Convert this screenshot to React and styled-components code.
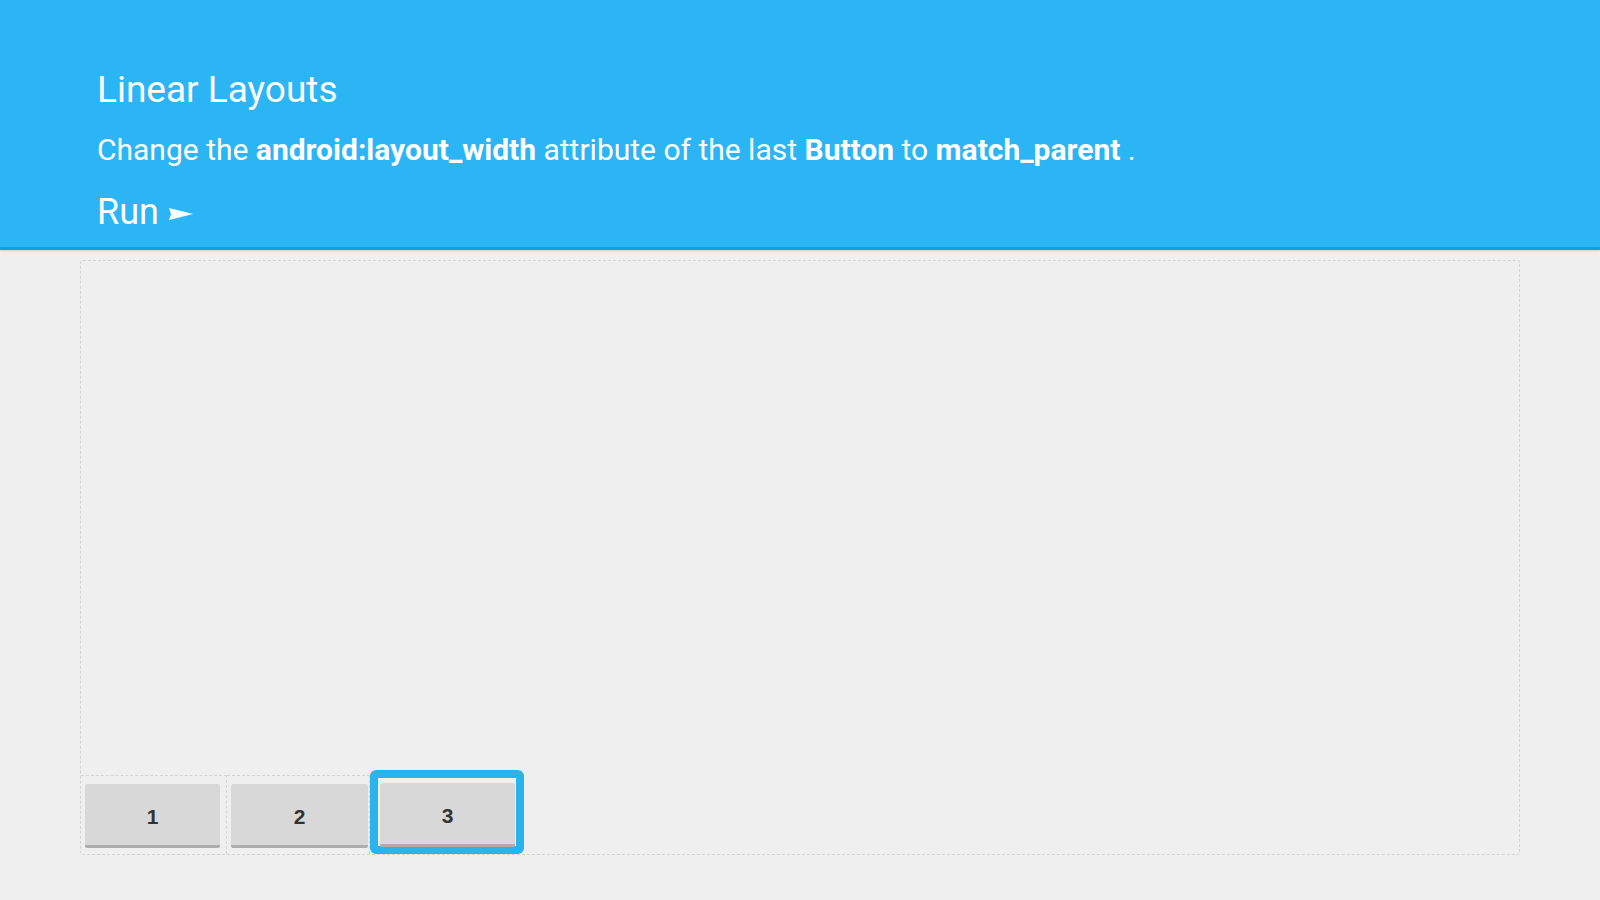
import React from "react";
import styled, { createGlobalStyle } from "styled-components";

const GlobalStyle = createGlobalStyle`
  html, body {
    margin: 0;
    padding: 0;
    background: #efefef;
    font-family: Roboto, "Noto Sans", "Liberation Sans", sans-serif;
  }
`;

// blue task header
const Header = styled.header`
  box-sizing: border-box;
  height: 250px;
  padding: 70px 0 0 97px;
  background: #2bb5f5;
  border-bottom: 3px solid #0aa2e4;
  box-shadow: 0 1px 2px rgba(0, 0, 0, 0.12);
  color: #fff;
`;

const Title = styled.h1`
  margin: 0;
  font-size: 37px;
  font-weight: 400;
  line-height: 40px;
`;

const Instructions = styled.p`
  margin: 20px 0 0;
  font-size: 30px;
  line-height: 40px;

  b {
    font-weight: 700;
  }
`;

const RunButton = styled.button`
  display: flex;
  align-items: center;
  gap: 10px;
  margin-top: 20px;
  padding: 0;
  border: none;
  background: none;
  color: #fff;
  font-family: inherit;
  font-size: 36px;
  line-height: 44px;
  cursor: pointer;

  svg {
    margin-top: 4px;
  }
`;

const Stage = styled.main`
  padding: 10px 80px 0 80px;
`;

// preview of the LinearLayout
const Canvas = styled.div`
  box-sizing: border-box;
  width: 1440px;
  height: 595px;
  border: 1px dashed #d3d3d3;
  border-radius: 3px;
  display: flex;
  flex-direction: column;
  justify-content: flex-end;
`;

const ButtonRow = styled.div`
  display: flex;
  align-items: flex-end;
`;

const Slot = styled.div`
  box-sizing: border-box;
  width: ${p => p.$width}px;
  height: ${p => (p.$selected ? 84 : 79)}px;
  padding: ${p => (p.$selected ? "5px 1px 0 2px" : p.$pad)};
  border-top: ${p => (p.$selected ? "" : "1px dashed #d3d3d3")};
  border-right: ${p => (p.$selected ? "" : "1px dashed #d3d3d3")};
  ${p =>
    p.$selected &&
    `
    border: 8px solid #29b4ee;
    border-radius: 6px;
  `}
`;

const WidgetButton = styled.div`
  box-sizing: border-box;
  height: 64px;
  padding-top: 4px;
  display: flex;
  align-items: center;
  justify-content: center;
  background: #d8d8d8;
  border-radius: 2px;
  border-bottom: 3px solid #aeaeae;
  color: #333;
  font-family: "Liberation Sans", Arial, sans-serif;
  font-size: 21px;
  font-weight: 700;
`;

const buttons = [
  { label: "1", width: 146, pad: "8px 6px 6px 4px" },
  { label: "2", width: 143, pad: "8px 1px 6px 4px" },
  { label: "3", width: 154, selected: true }
];

const App = () => {
  return (
    <>
      <GlobalStyle />
      <Header>
        <Title>Linear Layouts</Title>
        <Instructions>
          Change the <b>android:layout_width</b> attribute of the last{" "}
          <b>Button</b> to <b>match_parent</b> .
        </Instructions>
        <RunButton>
          Run
          <svg width="24" height="12" viewBox="0 0 24 12">
            <polygon points="0,0 24,6 0,12 2,6" fill="#fff" />
          </svg>
        </RunButton>
      </Header>
      <Stage>
        <Canvas>
          <ButtonRow>
            {buttons.map(b => (
              <Slot
                key={b.label}
                $width={b.width}
                $pad={b.pad}
                $selected={b.selected}
              >
                <WidgetButton>{b.label}</WidgetButton>
              </Slot>
            ))}
          </ButtonRow>
        </Canvas>
      </Stage>
    </>
  );
};

export default App;
